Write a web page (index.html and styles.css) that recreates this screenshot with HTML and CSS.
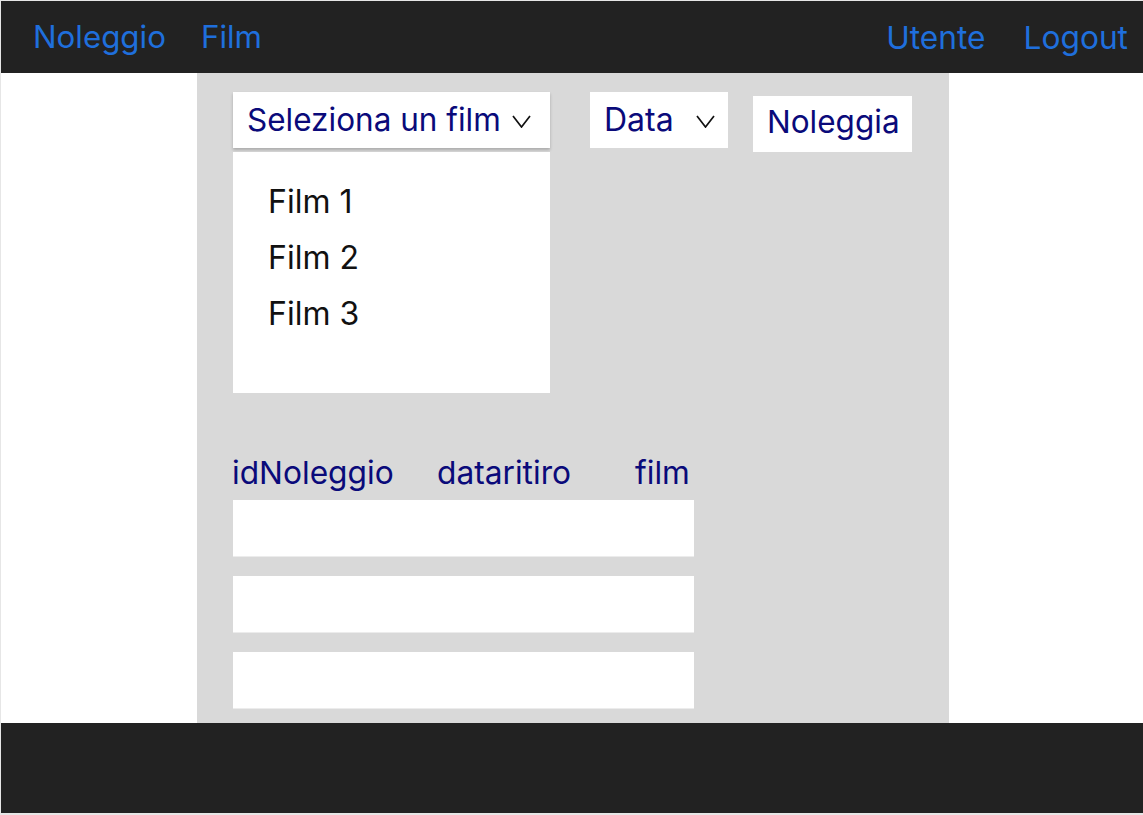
FILE: index.html
```
<!DOCTYPE html>
<html lang="it">
<head>
<meta charset="utf-8">
<title>Noleggio</title>
<link rel="stylesheet" href="styles.css">
</head>
<body>
<div class="page">
  <header class="topbar">
    <nav class="nav-left">
      <a class="nav-link" href="#">Noleggio</a>
      <a class="nav-link" href="#">Film</a>
    </nav>
    <nav class="nav-right">
      <a class="nav-link" href="#">Utente</a>
      <a class="nav-link" href="#">Logout</a>
    </nav>
  </header>
  <main class="main">
    <section class="panel">
      <div class="controls">
        <div class="select-group">
          <div class="select">
            <span class="select-label">Seleziona un film</span>
            <svg class="chev" width="19" height="13" viewBox="0 0 19 13"><polyline points="1,1 9.5,12 18,1" fill="none" stroke="#111" stroke-width="1.7"/></svg>
          </div>
          <ul class="menu">
            <li class="menu-item">Film 1</li>
            <li class="menu-item">Film 2</li>
            <li class="menu-item">Film 3</li>
          </ul>
        </div>
        <div class="date-box">
          <span class="date-label">Data</span>
          <svg class="chev" width="19" height="13" viewBox="0 0 19 13"><polyline points="1,1 9.5,12 18,1" fill="none" stroke="#111" stroke-width="1.7"/></svg>
        </div>
        <button class="btn">Noleggia</button>
      </div>
      <div class="table">
        <div class="thead">
          <span class="th">idNoleggio</span>
          <span class="th">dataritiro</span>
          <span class="th">film</span>
        </div>
        <div class="row"></div>
        <div class="row"></div>
        <div class="row"></div>
      </div>
    </section>
  </main>
  <footer class="footer"></footer>
</div>
</body>
</html>
```
FILE: styles.css
```
* { box-sizing: border-box; }
html, body { margin: 0; padding: 0; background: #ffffff; }
body { font-family: Inter, "Noto Sans", sans-serif; }
.page {
  width: 1143px;
  height: 815px;
  padding: 1px 0 2px 1px;
  display: flex;
  flex-direction: column;
  background: #e6e6e6;
  overflow: hidden;
}
.topbar {
  flex: none;
  height: 72px;
  background: #222222;
  display: flex;
  align-items: center;
  justify-content: space-between;
  padding: 0 15px 0 32px;
}
.nav-left, .nav-right { display: flex; align-items: center; }
.nav-left { gap: 35px; }
.nav-right { gap: 38px; }
.nav-link {
  color: #1f6fdc;
  text-decoration: none;
  font-size: 31.3px;
  line-height: 1;
  padding-top: 1px;
}
.nav-right .nav-link { font-size: 31.7px; }
.main {
  flex: none;
  height: 650px;
  background: #ffffff;
  display: flex;
  padding-left: 196px;
}
.panel {
  width: 752px;
  background: #d9d9d9;
  padding: 19px 0 0 36px;
}
.controls {
  display: flex;
  align-items: flex-start;
}
.select-group { width: 317px; }
.select {
  height: 56px;
  background: #ffffff;
  display: flex;
  align-items: center;
  justify-content: space-between;
  padding: 0 19px 0 14px;
  box-shadow: 0 2px 3px rgba(0,0,0,0.22);
}
.select-label {
  color: #0a0a7a;
  font-size: 31.5px;
  line-height: 1;
}
.chev { flex: none; margin-top: 2px; }
.menu {
  list-style: none;
  margin: 4px 0 0 0;
  padding: 22px 0 0 35px;
  height: 241px;
  background: #ffffff;
}
.menu-item {
  font-size: 32px;
  line-height: 56px;
  height: 56px;
  color: #111111;
}
.date-box {
  margin-left: 40px;
  width: 138px;
  height: 56px;
  background: #ffffff;
  display: flex;
  align-items: center;
  justify-content: space-between;
  padding: 0 13px 0 14px;
}
.date-label {
  color: #0a0a7a;
  font-size: 32px;
  line-height: 1;
}
.btn {
  margin-left: 25px;
  margin-top: 4px;
  width: 159px;
  height: 56px;
  background: #ffffff;
  border: none;
  padding: 0 0 5px 14px;
  text-align: left;
  font-family: inherit;
  color: #0a0a7a;
  font-size: 31.5px;
  line-height: 1;
}
.table {
  margin-top: 53px;
  width: 461px;
}
.thead {
  display: grid;
  grid-template-columns: 205px 198px auto;
  height: 54px;
  align-items: center;
}
.th {
  color: #0a0a7a;
  font-size: 31.7px;
  line-height: 1;
  margin-left: -1px;
}
.row {
  height: 57px;
  background: #ffffff;
  border-bottom: 1px solid #ececec;
}
.row + .row { margin-top: 19px; }
.footer {
  flex: none;
  height: 90px;
  background: #222222;
}
```
